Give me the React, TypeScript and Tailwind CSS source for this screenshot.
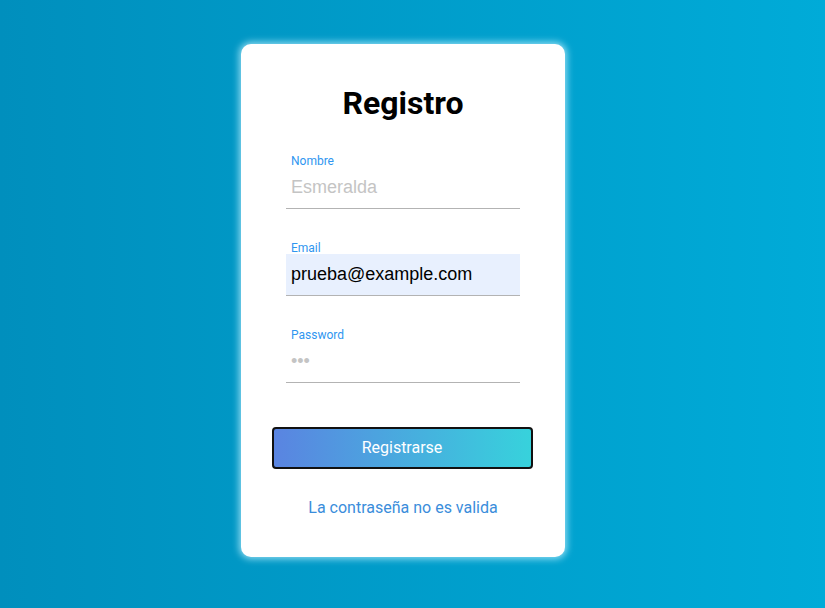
import { useState } from 'react';

export default function App() {
  const [email, setEmail] = useState('prueba@example.com');

  return (
    <div className="min-h-screen w-full flex items-center justify-center pr-[19px] pb-[7px] bg-[linear-gradient(to_right,#008fbd,#00abd8)] font-['Roboto',sans-serif]">
      <div className="w-[324px] h-[513px] bg-white rounded-[10px] shadow-[0_0_7px_2px_rgba(190,240,255,0.75)] flex flex-col items-center pt-10">
        <h1 className="text-[32px] leading-9 font-bold text-black translate-y-px">Registro</h1>

        <form className="flex flex-col items-center mt-[31px]" onSubmit={(e) => e.preventDefault()}>
          <div className="w-[234px] flex flex-col">
            <label className="text-xs leading-4 text-[#2f96f0] px-[5px] translate-y-[1.5px]">Nombre</label>
            <input
              type="text"
              placeholder="Esmeralda"
              className="h-[42px] px-[5px] border-b border-[#b3b3b3] outline-none font-['Liberation_Sans',sans-serif] text-[18px] text-black placeholder:text-[#c4c4c4]"
            />
          </div>

          <div className="w-[234px] flex flex-col mt-[29px]">
            <label className="text-xs leading-4 text-[#2f96f0] px-[5px] translate-y-[1.5px]">Email</label>
            <input
              type="email"
              value={email}
              onChange={(e) => setEmail(e.target.value)}
              className="h-[42px] px-[5px] bg-[#e8f0fe] border-b border-[#b3b3b3] outline-none font-['Liberation_Sans',sans-serif] text-[18px] text-black"
            />
          </div>

          <div className="w-[234px] flex flex-col mt-[29px]">
            <label className="text-xs leading-4 text-[#2f96f0] px-[5px] translate-y-[1.5px]">Password</label>
            <input
              type="password"
              placeholder="•••"
              className="h-[42px] px-[5px] border-b border-[#b3b3b3] outline-none font-['Liberation_Sans',sans-serif] text-[18px] text-black placeholder:text-[#c4c4c4]"
            />
          </div>

          <button
            type="submit"
            className="mt-[44px] mr-[2px] w-[261px] h-[42px] rounded-[4px] border-2 border-[#111] bg-[linear-gradient(to_right,#5a84e1,#37d2dc)] text-white text-base"
          >
            Registrarse
          </button>
        </form>

        <p className="mt-[27px] text-base leading-6 text-[#3a8ddb]">La contraseña no es valida</p>
      </div>
    </div>
  );
}
